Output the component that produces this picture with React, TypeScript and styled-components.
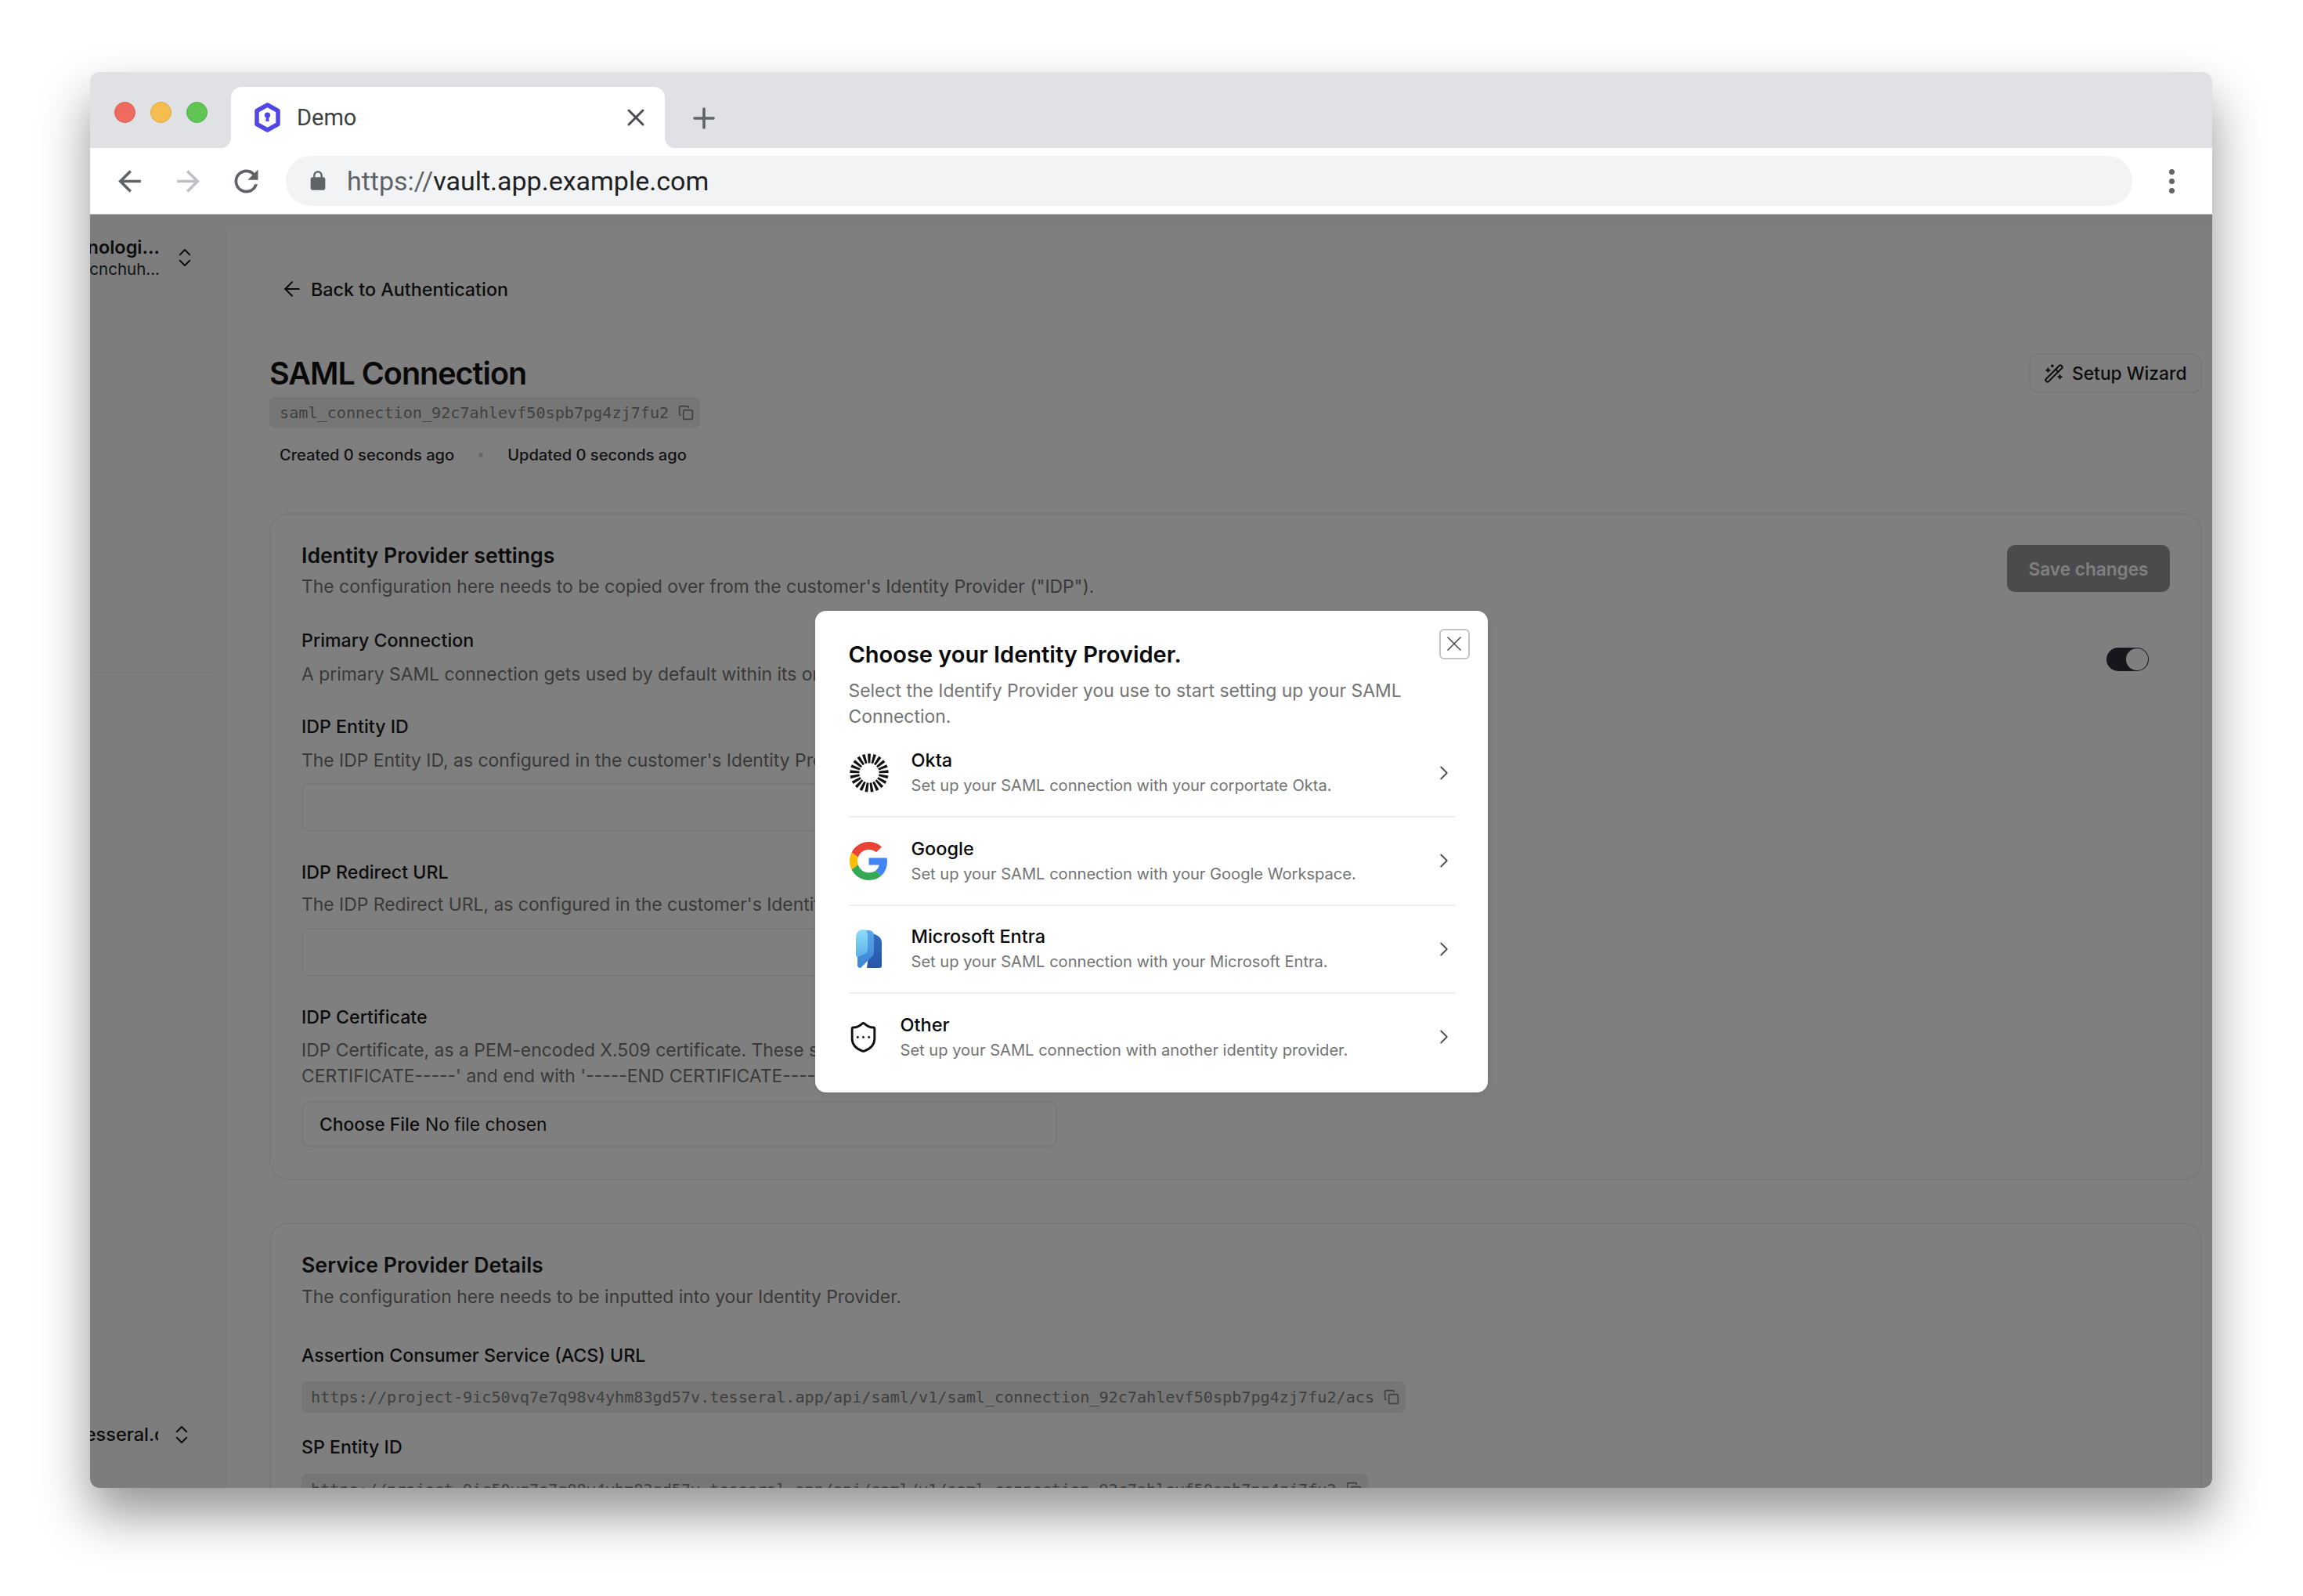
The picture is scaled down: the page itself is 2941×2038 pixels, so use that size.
import React from 'react';
import styled, { createGlobalStyle } from 'styled-components';
import { ArrowLeft, ChevronRight, ChevronsUpDown, Copy, ShieldEllipsis, WandSparkles, X } from 'lucide-react';

const GlobalStyle = createGlobalStyle`
  html, body {
    margin: 0;
    background: #fff;
  }
  * {
    box-sizing: border-box;
  }
`;

const sans = `Inter, "Liberation Sans", sans-serif`;
const mono = `"DejaVu Sans Mono", "Liberation Mono", monospace`;

const Page = styled.div`
  width: 2941px;
  height: 2038px;
  padding: 92px 0 0 115px;
  overflow: hidden;
  font-family: ${sans};
  color: #18181b;
`;

const BrowserWindow = styled.div`
  width: 2710px;
  height: 1808px;
  display: flex;
  flex-direction: column;
  border-radius: 12px;
  overflow: hidden;
  box-shadow: 0 34px 64px rgba(0, 0, 0, 0.42);
`;

const TabStrip = styled.div`
  height: 97px;
  flex: none;
  display: flex;
  align-items: flex-end;
  background: #dfe1e5;
`;

const Lights = styled.div`
  align-self: flex-start;
  display: flex;
  gap: 19px;
  margin: 38px 0 0 31px;
`;

const Light = styled.span<{ $fill: string; $edge: string }>`
  width: 27px;
  height: 27px;
  border-radius: 50%;
  background: ${p => p.$fill};
  border: 1px solid ${p => p.$edge};
`;

const Tab = styled.div`
  position: relative;
  width: 554px;
  height: 78px;
  margin-left: 30px;
  padding: 0 19px 0 30px;
  display: flex;
  align-items: center;
  background: #fff;
  border-radius: 14px 14px 0 0;

  &::before,
  &::after {
    content: '';
    position: absolute;
    bottom: 0;
    width: 14px;
    height: 14px;
    background: radial-gradient(circle at 0 0, #dfe1e5 14px, #fff 14.5px);
  }
  &::before {
    left: -14px;
  }
  &::after {
    right: -14px;
    background: radial-gradient(circle at 100% 0, #dfe1e5 14px, #fff 14.5px);
  }
`;

const TabTitle = styled.span`
  flex: 1;
  margin-left: 21px;
  font-family: Roboto, "Liberation Sans", sans-serif;
  font-size: 29px;
  color: #3c4043;
`;

const NewTab = styled.div`
  margin: 0 0 24px 36px;
  display: flex;
  color: #5f6368;
`;

const Toolbar = styled.div`
  height: 85px;
  flex: none;
  display: flex;
  align-items: center;
  padding-left: 29px;
  background: #fff;
  border-bottom: 1px solid #c8c8c8;
`;

const NavIcon = styled.svg<{ $faded?: boolean; $gap?: number }>`
  flex: none;
  margin-left: ${p => p.$gap ?? 0}px;
  fill: ${p => (p.$faded ? '#bdc1c6' : '#5f6368')};
`;

const UrlBar = styled.div`
  width: 2358px;
  height: 64px;
  margin-left: 28px;
  padding-left: 27px;
  display: flex;
  align-items: center;
  border-radius: 32px;
  background: #f1f3f4;
`;

const UrlText = styled.span`
  margin-left: 23px;
  font-family: Roboto, "Liberation Sans", sans-serif;
  font-size: 34px;
  color: #202124;
`;

const UrlScheme = styled.span`
  color: #5f6368;
`;

const MenuDots = styled.div`
  margin-left: 47px;
  display: flex;
  flex-direction: column;
  gap: 5px;

  span {
    width: 7px;
    height: 7px;
    border-radius: 50%;
    background: #5f6368;
  }
`;

const AppBody = styled.div`
  position: relative;
  flex: 1;
  min-height: 0;
  display: flex;
  overflow: hidden;
  background: #fafafa;
`;

const Sidebar = styled.aside`
  width: 174px;
  flex: none;
  display: flex;
  flex-direction: column;
  overflow: hidden;
`;

const Switcher = styled.div<{ $top?: number; $bottom?: number }>`
  display: flex;
  align-items: center;
  margin-top: ${p => p.$top ?? 0}px;
  margin-bottom: ${p => p.$bottom ?? 0}px;
  color: #18181b;
`;

const SwitcherText = styled.div<{ $width: number; $gap: number }>`
  width: ${p => p.$width}px;
  margin-right: ${p => p.$gap}px;
  flex: none;
  display: flex;
  flex-direction: column;
  align-items: flex-end;
  overflow: hidden;
`;

const OrgName = styled.div`
  white-space: nowrap;
  font-size: 23.5px;
  line-height: 30px;
  font-weight: 600;
  color: #18181b;
`;

const OrgSub = styled.div`
  white-space: nowrap;
  font-size: 20.5px;
  line-height: 25px;
  color: #27272a;
`;

const UserName = styled.div`
  align-self: flex-start;
  margin-left: -14px;
  white-space: nowrap;
  font-size: 23.5px;
  line-height: 30px;
  font-weight: 500;
  color: #18181b;
`;

const SidebarRule = styled.div`
  height: 1px;
  width: 161px;
  margin-top: 502px;
  background: #ececec;
`;

const Spacer = styled.div`
  flex: 1;
`;

const Main = styled.main`
  flex: 1;
  min-width: 0;
  margin-top: 14px;
  padding: 65px 13px 0 54px;
  background: #fff;
  border-left: 1px solid #f4f4f4;
  border-top: 1px solid #f4f4f4;
`;

const BackLink = styled.div`
  display: flex;
  align-items: center;
  gap: 9px;
  margin-left: 14px;
  height: 30px;
  font-size: 23.3px;
  font-weight: 500;
  color: #18181b;
`;

const Header = styled.div`
  display: flex;
  align-items: flex-start;
  justify-content: space-between;
  margin-top: 68px;
`;

const PageTitle = styled.h1`
  margin: 0;
  font-size: 39.5px;
  line-height: 50px;
  font-weight: 600;
  letter-spacing: -1px;
  color: #111;
`;

const CodeChip = styled.div<{ $top?: number }>`
  display: inline-flex;
  align-items: center;
  gap: 12px;
  height: 39px;
  margin-top: ${p => p.$top ?? 0}px;
  padding: 0 8px 0 13px;
  border-radius: 7px;
  background: #ececec;
  font-family: ${mono};
  font-size: 20.15px;
  white-space: nowrap;
  color: #808080;
`;

const Meta = styled.div`
  display: flex;
  align-items: center;
  height: 30px;
  margin: 20px 0 0 13px;
  font-size: 20.1px;
  font-weight: 500;
  color: #27272a;
`;

const MetaDot = styled.span`
  width: 6px;
  height: 6px;
  margin: 0 31px;
  border-radius: 50%;
  background: #d4d4d8;
`;

const WizardButton = styled.div`
  display: flex;
  align-items: center;
  gap: 10px;
  height: 51px;
  width: 221px;
  margin-top: -1px;
  padding-left: 17px;
  border: 2px solid #f0f0f0;
  border-radius: 12px;
  font-size: 22.8px;
  font-weight: 500;
  color: #18181b;
`;

const Card = styled.section<{ $top: number }>`
  margin-top: ${p => p.$top}px;
  padding: 34px 39px 40px;
  border: 2px solid #f1f1f1;
  border-radius: 24px;
`;

const CardHead = styled.div`
  display: flex;
  justify-content: space-between;
  align-items: flex-start;
`;

const CardTitle = styled.h2`
  margin: 0;
  font-size: 26.7px;
  line-height: 36px;
  font-weight: 600;
  color: #18181b;
`;

const Help = styled.p<{ $top?: number }>`
  margin: ${p => p.$top ?? 0}px 0 0;
  font-size: 22.9px;
  line-height: 33px;
  white-space: nowrap;
  color: #737373;
`;

const SaveButton = styled.div`
  width: 208px;
  height: 60px;
  margin-top: 5px;
  display: flex;
  align-items: center;
  justify-content: center;
  border-radius: 10px;
  background: #949498;
  font-size: 22.6px;
  font-weight: 600;
  color: #fff;
  opacity: 0.98;
`;

const ToggleRow = styled.div`
  display: flex;
  align-items: center;
  justify-content: space-between;
  margin-top: 36px;
  padding-right: 27px;
`;

const Toggle = styled.div`
  width: 54px;
  height: 30px;
  margin-top: 4px;
  display: flex;
  justify-content: flex-end;
  padding: 1px;
  border-radius: 15px;
  background: #2d2d3a;

  &::after {
    content: '';
    width: 28px;
    height: 28px;
    border-radius: 50%;
    background: #fff;
  }
`;

const Field = styled.div<{ $top: number }>`
  margin-top: ${p => p.$top}px;
`;

const Label = styled.div`
  font-size: 23.2px;
  line-height: 32px;
  font-weight: 500;
  color: #18181b;
`;

const Input = styled.div<{ $height: number; $top: number }>`
  width: 965px;
  height: ${p => p.$height}px;
  margin-top: ${p => p.$top}px;
  display: flex;
  align-items: center;
  gap: 7px;
  padding-left: 21px;
  border: 2px solid #f0f0f0;
  border-radius: 10px;
  font-size: 22.8px;
  color: #18181b;
`;

const FileButton = styled.span`
  font-weight: 500;
`;

const UrlChip = styled(CodeChip)`
  display: flex;
  width: fit-content;
  height: 40px;
  padding: 0 8px 0 12px;
`;

const Backdrop = styled.div`
  position: absolute;
  inset: 0;
  display: flex;
  align-items: center;
  justify-content: center;
  background: rgba(0, 0, 0, 0.5);
`;

const Modal = styled.div`
  position: relative;
  width: 859px;
  height: 615px;
  padding: 36px 42px 13px 43px;
  border-radius: 14px;
  background: #fff;
  box-shadow: 0 2px 6px rgba(0, 0, 0, 0.1);
`;

const CloseButton = styled.div`
  position: absolute;
  top: 23px;
  right: 23px;
  width: 39px;
  height: 39px;
  display: flex;
  align-items: center;
  justify-content: center;
  border: 2px solid #c4c4c4;
  border-radius: 6px;
  color: #52525b;
`;

const ModalTitle = styled.h3`
  margin: 0;
  font-size: 29px;
  line-height: 40px;
  font-weight: 600;
  color: #09090b;
`;

const ModalHelp = styled.p`
  margin: 10px 0 0;
  font-size: 22.9px;
  line-height: 33px;
  color: #737373;
`;

const ProviderRow = styled.div`
  height: 112.5px;
  display: flex;
  align-items: center;
  border-bottom: 2px solid #eeeeee;

  &:last-child {
    border-bottom-color: transparent;
  }
`;

const IconSlot = styled.div<{ $width: number; $inset: number }>`
  width: ${p => p.$width}px;
  flex: none;
  display: flex;

  svg {
    margin-left: ${p => p.$inset}px;
  }
`;

const ProviderText = styled.div`
  flex: 1;
`;

const ProviderName = styled.div`
  font-size: 23.5px;
  line-height: 30px;
  font-weight: 500;
  color: #09090b;
`;

const ProviderHelp = styled.div`
  margin-top: 3px;
  font-size: 20.1px;
  line-height: 28px;
  color: #737373;
`;

const Chevron = styled(ChevronRight)`
  flex: none;
  margin-right: -1px;
  color: #52525b;
`;

const OktaRays: React.FC = () => {
  const rays = Array.from({ length: 21 }, (_, i) => (i * 360) / 21);
  return (
    <svg width="50" height="50" viewBox="0 0 50 50">
      {rays.map(angle => (
        <path
          key={angle}
          d="M23.1 0.4 L26.9 0.4 L26.3 12.4 L23.7 12.4 Z"
          fill="#111"
          transform={`rotate(${angle} 25 25)`}
        />
      ))}
    </svg>
  );
};

const GoogleLogo: React.FC = () => (
  <svg width="49" height="49" viewBox="0 0 48 48">
    <path fill="#EA4335" d="M24 9.5c3.54 0 6.71 1.22 9.21 3.6l6.85-6.85C35.9 2.38 30.47 0 24 0 14.62 0 6.51 5.38 2.56 13.22l7.98 6.19C12.43 13.72 17.74 9.5 24 9.5z" />
    <path fill="#4285F4" d="M46.98 24.55c0-1.57-.15-3.09-.38-4.55H24v9.02h12.94c-.58 2.96-2.26 5.48-4.78 7.18l7.73 6c4.51-4.18 7.09-10.36 7.09-17.65z" />
    <path fill="#FBBC05" d="M10.53 28.59c-.48-1.45-.76-2.99-.76-4.59s.27-3.14.76-4.59l-7.98-6.19C.92 16.46 0 20.12 0 24c0 3.88.92 7.54 2.56 10.78l7.97-6.19z" />
    <path fill="#34A853" d="M24 48c6.48 0 11.93-2.13 15.89-5.81l-7.73-6c-2.15 1.45-4.92 2.3-8.16 2.3-6.26 0-11.57-4.22-13.47-9.91l-7.98 6.19C6.51 42.62 14.62 48 24 48z" />
  </svg>
);

const EntraLogo: React.FC = () => (
  <svg width="33" height="49" viewBox="0 0 33 49">
    <defs>
      <linearGradient id="entraBack" x1="0" y1="0" x2="0" y2="1">
        <stop offset="0" stopColor="#2f6ec4" />
        <stop offset="1" stopColor="#2a55a8" />
      </linearGradient>
      <linearGradient id="entraMid" x1="0" y1="0" x2="0" y2="1">
        <stop offset="0" stopColor="#5aa6e8" />
        <stop offset="1" stopColor="#3a83d6" />
      </linearGradient>
      <linearGradient id="entraFront" x1="0" y1="0" x2="0" y2="1">
        <stop offset="0" stopColor="#8fdcf6" />
        <stop offset="1" stopColor="#5bb2ec" />
      </linearGradient>
    </defs>
    <path fill="url(#entraBack)" d="M20 4 L28 8 Q33 11 33 17 L33 46 Q33 49 30 49 L14 49 Z" />
    <path fill="url(#entraMid)" d="M2 30 L10 1 L17 1 Q23 1 23 9 L23 30 Q23 32 21 34 L6 49 Q2 49 2 45 Z" />
    <path fill="url(#entraFront)" d="M0 12 Q0 0 9 0 Q15 0 15 8 L15 25 Q15 29 11 31 L2 35 Q0 35 0 32 Z" />
  </svg>
);

const TabLogo: React.FC = () => (
  <svg width="33" height="38" viewBox="0 0 33 38" style={{ flex: 'none' }}>
    <path d="M16.5 3 L30 10.5 L30 27.5 L16.5 35 L3 27.5 L3 10.5 Z" fill="none" stroke="#4f46e5" strokeWidth="5.5" strokeLinejoin="round" />
    <circle cx="16.5" cy="16" r="3.6" fill="#4f46e5" />
    <path d="M15 17 L18 17 L18.6 24 L14.4 24 Z" fill="#4f46e5" />
  </svg>
);

const providers = [
  { name: 'Okta', help: 'Set up your SAML connection with your corportate Okta.', width: 80, inset: 1, icon: <OktaRays /> },
  { name: 'Google', help: 'Set up your SAML connection with your Google Workspace.', width: 80, inset: 1, icon: <GoogleLogo /> },
  { name: 'Microsoft Entra', help: 'Set up your SAML connection with your Microsoft Entra.', width: 80, inset: 9, icon: <EntraLogo /> },
  { name: 'Other', help: 'Set up your SAML connection with another identity provider.', width: 66, inset: -3, icon: <ShieldEllipsis size={43} strokeWidth={1.6} color="#111" /> },
];

const App: React.FC = () => (
  <Page>
    <GlobalStyle />
    <BrowserWindow>
      <TabStrip>
        <Lights>
          <Light $fill="#ef6a5f" $edge="#dc5a50" />
          <Light $fill="#f5bd4f" $edge="#dfa73f" />
          <Light $fill="#61c554" $edge="#52ae46" />
        </Lights>
        <Tab>
          <TabLogo />
          <TabTitle>Demo</TabTitle>
          <X size={36} strokeWidth={2} color="#4a4d51" />
        </Tab>
        <NewTab>
          <svg width="28" height="28" viewBox="0 0 28 28">
            <path d="M14 2 V26 M2 14 H26" stroke="#5f6368" strokeWidth="3.6" strokeLinecap="round" />
          </svg>
        </NewTab>
      </TabStrip>

      <Toolbar>
        <NavIcon width="43" height="43" viewBox="0 0 24 24">
          <path d="M20 11H7.83l5.59-5.59L12 4l-8 8 8 8 1.41-1.41L7.83 13H20v-2z" />
        </NavIcon>
        <NavIcon width="43" height="43" viewBox="0 0 24 24" $faded $gap={32}>
          <path d="M4 11h12.17l-5.59-5.59L12 4l8 8-8 8-1.41-1.41L16.17 13H4v-2z" />
        </NavIcon>
        <NavIcon width="45" height="45" viewBox="0 0 24 24" $gap={30}>
          <path d="M17.65 6.35A7.958 7.958 0 0012 4c-4.42 0-7.99 3.58-7.99 8s3.57 8 7.99 8c3.73 0 6.84-2.55 7.73-6h-2.08A5.99 5.99 0 0112 18c-3.31 0-6-2.69-6-6s2.69-6 6-6c1.66 0 3.14.69 4.22 1.78L13 11h7V4l-2.35 2.35z" />
        </NavIcon>
        <UrlBar>
          <NavIcon width="28" height="28" viewBox="0 0 24 24">
            <path d="M18 8h-1V6c0-2.76-2.24-5-5-5S7 3.24 7 6v2H6c-1.1 0-2 .9-2 2v10c0 1.1.9 2 2 2h12c1.1 0 2-.9 2-2V10c0-1.1-.9-2-2-2zM9 6c0-1.66 1.34-3 3-3s3 1.34 3 3v2H9V6z" />
          </NavIcon>
          <UrlText>
            <UrlScheme>https://</UrlScheme>vault.app.example.com
          </UrlText>
        </UrlBar>
        <MenuDots>
          <span />
          <span />
          <span />
        </MenuDots>
      </Toolbar>

      <AppBody>
        <Sidebar>
          <Switcher $top={27}>
            <SwitcherText $width={89} $gap={17}>
              <OrgName>Technologi...</OrgName>
              <OrgSub>org_xcnchuh...</OrgSub>
            </SwitcherText>
            <ChevronsUpDown size={30} strokeWidth={1.6} />
          </Switcher>
          <SidebarRule />
          <Spacer />
          <Switcher $bottom={53}>
            <SwitcherText $width={87} $gap={15}>
              <UserName>tesseral.com</UserName>
            </SwitcherText>
            <ChevronsUpDown size={30} strokeWidth={1.6} />
          </Switcher>
        </Sidebar>

        <Main>
          <BackLink>
            <ArrowLeft size={30} strokeWidth={1.7} />
            Back to Authentication
          </BackLink>

          <Header>
            <div>
              <PageTitle>SAML Connection</PageTitle>
              <CodeChip $top={5}>
                saml_connection_92c7ahlevf50spb7pg4zj7fu2
                <Copy size={20} />
              </CodeChip>
              <Meta>
                Created 0 seconds ago
                <MetaDot />
                Updated 0 seconds ago
              </Meta>
            </div>
            <WizardButton>
              <WandSparkles size={26} strokeWidth={1.8} />
              Setup Wizard
            </WizardButton>
          </Header>

          <Card $top={59}>
            <CardHead>
              <div>
                <CardTitle>Identity Provider settings</CardTitle>
                <Help $top={6}>The configuration here needs to be copied over from the customer's Identity Provider ("IDP").</Help>
              </div>
              <SaveButton>Save changes</SaveButton>
            </CardHead>

            <ToggleRow>
              <div>
                <Label>Primary Connection</Label>
                <Help $top={11}>A primary SAML connection gets used by default within its organization.</Help>
              </div>
              <Toggle />
            </ToggleRow>

            <Field $top={34}>
              <Label>IDP Entity ID</Label>
              <Help $top={11}>The IDP Entity ID, as configured in the customer's Identity Provider.</Help>
              <Input $height={62} $top={12} />
            </Field>

            <Field $top={36}>
              <Label>IDP Redirect URL</Label>
              <Help $top={9}>The IDP Redirect URL, as configured in the customer's Identity Provider.</Help>
              <Input $height={62} $top={13} />
            </Field>

            <Field $top={36}>
              <Label>IDP Certificate</Label>
              <Help $top={10}>
                IDP Certificate, as a PEM-encoded X.509 certificate. These start with '-----BEGIN
                <br />
                CERTIFICATE-----' and end with '-----END CERTIFICATE-----'.
              </Help>
              <Input $height={59} $top={15}>
                <FileButton>Choose File</FileButton> No file chosen
              </Input>
            </Field>
          </Card>

          <Card $top={54}>
            <CardTitle>Service Provider Details</CardTitle>
            <Help $top={7}>The configuration here needs to be inputted into your Identity Provider.</Help>
            <Field $top={42}>
              <Label>Assertion Consumer Service (ACS) URL</Label>
              <UrlChip $top={17}>
                https://project-9ic50vq7e7q98v4yhm83gd57v.tesseral.app/api/saml/v1/saml_connection_92c7ahlevf50spb7pg4zj7fu2/acs
                <Copy size={20} />
              </UrlChip>
            </Field>
            <Field $top={28}>
              <Label>SP Entity ID</Label>
              <UrlChip $top={18}>
                https://project-9ic50vq7e7q98v4yhm83gd57v.tesseral.app/api/saml/v1/saml_connection_92c7ahlevf50spb7pg4zj7fu2
                <Copy size={20} />
              </UrlChip>
            </Field>
          </Card>
        </Main>

        <Backdrop>
          <Modal>
            <CloseButton>
              <X size={32} strokeWidth={1.3} />
            </CloseButton>
            <ModalTitle>Choose your Identity Provider.</ModalTitle>
            <ModalHelp>
              Select the Identify Provider you use to start setting up your SAML Connection.
            </ModalHelp>
            {providers.map(provider => (
              <ProviderRow key={provider.name}>
                <IconSlot $width={provider.width} $inset={provider.inset}>
                  {provider.icon}
                </IconSlot>
                <ProviderText>
                  <ProviderName>{provider.name}</ProviderName>
                  <ProviderHelp>{provider.help}</ProviderHelp>
                </ProviderText>
                <Chevron size={30} strokeWidth={1.5} />
              </ProviderRow>
            ))}
          </Modal>
        </Backdrop>
      </AppBody>
    </BrowserWindow>
  </Page>
);

export default App;
